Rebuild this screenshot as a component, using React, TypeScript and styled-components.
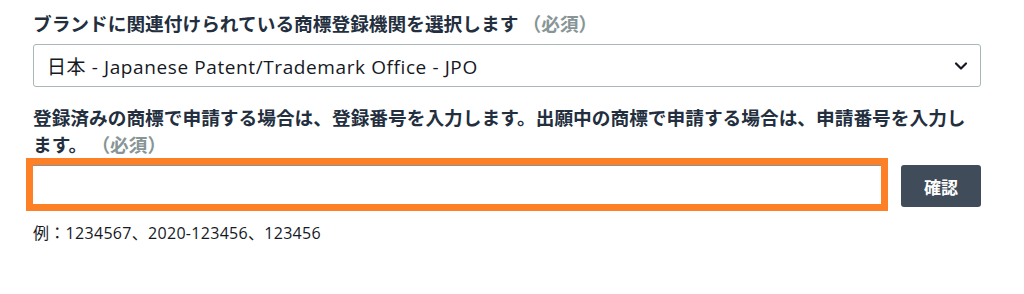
import React from "react";
import styled, { createGlobalStyle } from "styled-components";

const Global = createGlobalStyle`
  html, body { margin: 0; padding: 0; background: #ffffff; }
  body { font-family: "Open Sans", "Noto Sans CJK JP", sans-serif; color: #16191f; }
`;

const Page = styled.div`
  width: 1024px;
  height: 294px;
  box-sizing: border-box;
  padding: 9px 43px 0 33px;
  display: flex;
  flex-direction: column;
`;

const Label = styled.div<{ $top?: number }>`
  font-family: "Noto Sans CJK JP", sans-serif;
  font-size: 18.7px;
  line-height: 27px;
  font-weight: 700;
  color: #232f3e;
  margin-top: ${(p) => p.$top ?? 0}px;
`;

const Required = styled.span`
  color: #879596;
  font-weight: 700;
`;

const Select = styled.div`
  margin-top: 8px;
  height: 43px;
  box-sizing: border-box;
  border: 1px solid #aab7b8;
  border-radius: 3px;
  display: flex;
  align-items: center;
  justify-content: space-between;
  padding: 0 12px 0 13px;
  font-family: "Open Sans", "Noto Sans CJK JP", sans-serif;
  font-size: 19px;
  letter-spacing: 0.6px;
  color: #16191f;
`;

const Chevron = styled.svg`
  width: 14px;
  height: 10px;
`;

const Row = styled.div`
  margin-top: 8px;
  display: flex;
  align-items: flex-start;
  gap: 20px;
`;

const Input = styled.div`
  flex: 1;
  height: 39px;
  box-sizing: border-box;
  border-top: 1px solid #8d9096;
  outline: 7px solid #fd8027;
  background: #fff;
`;

const Button = styled.button`
  width: 80px;
  height: 42px;
  border: none;
  border-radius: 3px;
  background: #414c5a;
  color: #ffffff;
  font-family: "Noto Sans CJK JP", sans-serif;
  font-size: 17px;
  font-weight: 700;
  padding: 0;
`;

const Hint = styled.div`
  margin-top: 15px;
  font-family: "Open Sans", "Noto Sans CJK JP", sans-serif;
  font-size: 16px;
  letter-spacing: 0.3px;
  line-height: 22px;
  color: #16191f;
`;

export default function App() {
  return (
    <>
      <Global />
      <Page>
        <Label>
          ブランドに関連付けられている商標登録機関を選択します <Required>（必須）</Required>
        </Label>
        <Select>
          <span>日本 - Japanese Patent/Trademark Office - JPO</span>
          <Chevron viewBox="0 0 14 10">
            <path d="M2 2.5 L7 7.5 L12 2.5" fill="none" stroke="#16191f" strokeWidth="2.2" strokeLinecap="round" strokeLinejoin="round" />
          </Chevron>
        </Select>
        <Label $top={16}>
          登録済みの商標で申請する場合は、登録番号を入力します。出願中の商標で申請する場合は、申請番号を入力します。 <Required>（必須）</Required>
        </Label>
        <Row>
          <Input />
          <Button>確認</Button>
        </Row>
        <Hint>例：1234567、2020-123456、123456</Hint>
      </Page>
    </>
  );
}
